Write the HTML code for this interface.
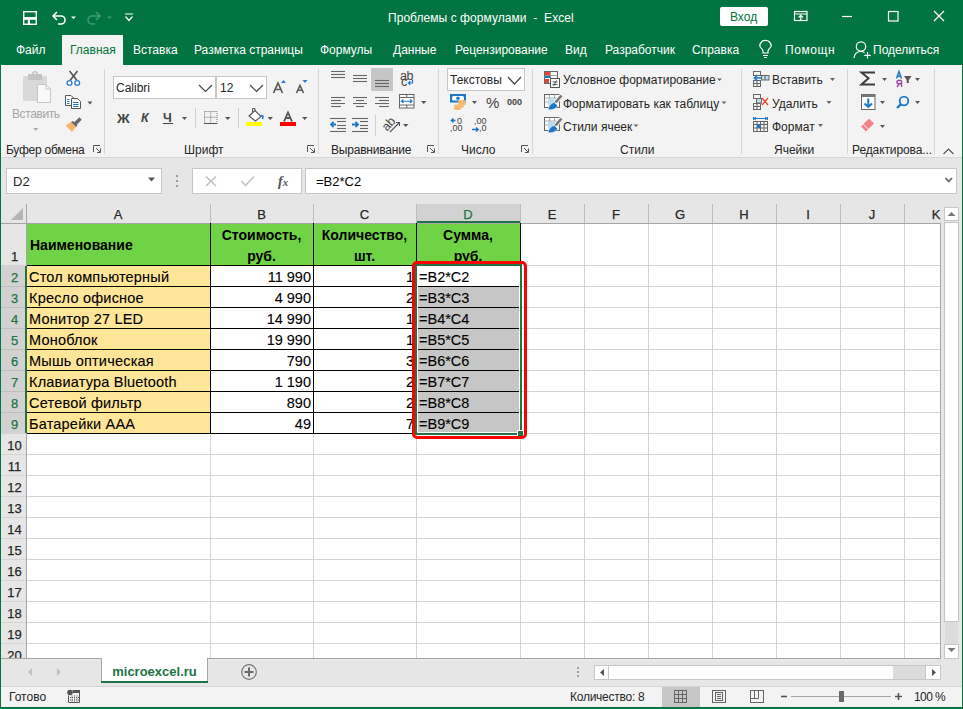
<!DOCTYPE html>
<html><head><meta charset="utf-8">
<style>
*{box-sizing:border-box;margin:0;padding:0}
html,body{width:963px;height:709px;overflow:hidden;background:#e6e6e6;font-family:"Liberation Sans",sans-serif;position:relative}
.a{position:absolute}
.t{position:absolute;white-space:nowrap;line-height:1}
svg{position:absolute;overflow:visible}
</style></head><body>

<div class="a" style="left:0px;top:0px;width:963px;height:65px;background:#027441;"></div>
<div class="t" style="left:388px;top:12px;font-size:12px;color:#fff;letter-spacing:0.05px">Проблемы с формулами &nbsp;-&nbsp; Excel</div>
<div class="a" style="left:720px;top:7px;width:48px;height:19px;background:#fff;border-radius:2px"></div>
<div class="t" style="left:730px;top:11px;font-size:12px;color:#027441;">Вход</div>
<div class="a" style="left:62px;top:35px;width:61px;height:30px;background:#f3f3f3;"></div>
<div class="t" style="left:16px;top:44px;font-size:12px;color:#fff;">Файл</div>
<div class="t" style="left:133px;top:44px;font-size:12px;color:#fff;">Вставка</div>
<div class="t" style="left:194px;top:44px;font-size:12px;color:#fff;">Разметка страницы</div>
<div class="t" style="left:320px;top:44px;font-size:12px;color:#fff;">Формулы</div>
<div class="t" style="left:393px;top:44px;font-size:12px;color:#fff;">Данные</div>
<div class="t" style="left:455px;top:44px;font-size:12px;color:#fff;">Рецензирование</div>
<div class="t" style="left:565px;top:44px;font-size:12px;color:#fff;">Вид</div>
<div class="t" style="left:605px;top:44px;font-size:12px;color:#fff;">Разработчик</div>
<div class="t" style="left:692px;top:44px;font-size:12px;color:#fff;">Справка</div>
<div class="t" style="left:785px;top:44px;font-size:12px;color:#fff;letter-spacing:0.6px">Помощн</div>
<div class="t" style="left:873px;top:44px;font-size:12px;color:#fff;">Поделиться</div>
<div class="t" style="left:70px;top:44px;font-size:12px;color:#027441;">Главная</div>
<div class="a" style="left:0px;top:65px;width:963px;height:92px;background:#f3f3f3;"></div>
<div class="a" style="left:0px;top:157px;width:963px;height:1px;background:#d6d6d6;"></div>
<div class="a" style="left:104px;top:69px;width:1px;height:85px;background:#d6d6d6;"></div>
<div class="a" style="left:318px;top:69px;width:1px;height:85px;background:#d6d6d6;"></div>
<div class="a" style="left:438px;top:69px;width:1px;height:85px;background:#d6d6d6;"></div>
<div class="a" style="left:532px;top:69px;width:1px;height:85px;background:#d6d6d6;"></div>
<div class="a" style="left:741px;top:69px;width:1px;height:85px;background:#d6d6d6;"></div>
<div class="a" style="left:847px;top:69px;width:1px;height:85px;background:#d6d6d6;"></div>
<div class="a" style="left:934px;top:69px;width:1px;height:85px;background:#d6d6d6;"></div>
<div class="t" style="left:6px;top:144px;font-size:12px;color:#262626;letter-spacing:-0.25px">Буфер обмена</div>
<div class="t" style="left:184px;top:144px;font-size:12px;color:#262626;letter-spacing:0px">Шрифт</div>
<div class="t" style="left:331px;top:144px;font-size:12px;color:#262626;letter-spacing:-0.2px">Выравнивание</div>
<div class="t" style="left:461px;top:144px;font-size:12px;color:#262626;letter-spacing:0px">Число</div>
<div class="t" style="left:620px;top:144px;font-size:12px;color:#262626;letter-spacing:0px">Стили</div>
<div class="t" style="left:774px;top:144px;font-size:12px;color:#262626;letter-spacing:0px">Ячейки</div>
<div class="t" style="left:852px;top:144px;font-size:12px;color:#262626;letter-spacing:-0.1px">Редактирова...</div>
<div class="a" style="left:6px;top:168px;width:156px;height:26px;background:#fff;border:1px solid #c6c6c6"></div>
<div class="t" style="left:13px;top:175px;font-size:13px;color:#262626;">D2</div>
<div class="a" style="left:192px;top:168px;width:110px;height:26px;background:#fff;border:1px solid #c6c6c6"></div>
<div class="a" style="left:305px;top:168px;width:652px;height:26px;background:#fff;border:1px solid #c6c6c6"></div>
<div class="t" style="left:316px;top:175px;font-size:13px;color:#000;">=B2*C2</div>
<div class="t" style="left:278px;top:175px;font-family:'Liberation Serif';font-style:italic;font-weight:bold;font-size:14px;color:#555">f<span style="font-size:11px">x</span></div>
<div class="a" style="left:1px;top:204px;width:940px;height:19px;background:#e6e6e6;"></div>
<div class="a" style="left:27px;top:224px;width:914px;height:434px;background:#fff;"></div>
<div class="a" style="left:210px;top:224px;width:1px;height:434px;background:#d4d4d4;"></div>
<div class="a" style="left:313px;top:224px;width:1px;height:434px;background:#d4d4d4;"></div>
<div class="a" style="left:416px;top:224px;width:1px;height:434px;background:#d4d4d4;"></div>
<div class="a" style="left:520px;top:224px;width:1px;height:434px;background:#d4d4d4;"></div>
<div class="a" style="left:584px;top:224px;width:1px;height:434px;background:#d4d4d4;"></div>
<div class="a" style="left:648px;top:224px;width:1px;height:434px;background:#d4d4d4;"></div>
<div class="a" style="left:712px;top:224px;width:1px;height:434px;background:#d4d4d4;"></div>
<div class="a" style="left:776px;top:224px;width:1px;height:434px;background:#d4d4d4;"></div>
<div class="a" style="left:840px;top:224px;width:1px;height:434px;background:#d4d4d4;"></div>
<div class="a" style="left:904px;top:224px;width:1px;height:434px;background:#d4d4d4;"></div>
<div class="a" style="left:27px;top:265px;width:914px;height:1px;background:#d4d4d4;"></div>
<div class="a" style="left:27px;top:286px;width:914px;height:1px;background:#d4d4d4;"></div>
<div class="a" style="left:27px;top:307px;width:914px;height:1px;background:#d4d4d4;"></div>
<div class="a" style="left:27px;top:328px;width:914px;height:1px;background:#d4d4d4;"></div>
<div class="a" style="left:27px;top:349px;width:914px;height:1px;background:#d4d4d4;"></div>
<div class="a" style="left:27px;top:370px;width:914px;height:1px;background:#d4d4d4;"></div>
<div class="a" style="left:27px;top:391px;width:914px;height:1px;background:#d4d4d4;"></div>
<div class="a" style="left:27px;top:412px;width:914px;height:1px;background:#d4d4d4;"></div>
<div class="a" style="left:27px;top:433px;width:914px;height:1px;background:#d4d4d4;"></div>
<div class="a" style="left:27px;top:454px;width:914px;height:1px;background:#d4d4d4;"></div>
<div class="a" style="left:27px;top:475px;width:914px;height:1px;background:#d4d4d4;"></div>
<div class="a" style="left:27px;top:496px;width:914px;height:1px;background:#d4d4d4;"></div>
<div class="a" style="left:27px;top:517px;width:914px;height:1px;background:#d4d4d4;"></div>
<div class="a" style="left:27px;top:538px;width:914px;height:1px;background:#d4d4d4;"></div>
<div class="a" style="left:27px;top:559px;width:914px;height:1px;background:#d4d4d4;"></div>
<div class="a" style="left:27px;top:580px;width:914px;height:1px;background:#d4d4d4;"></div>
<div class="a" style="left:27px;top:601px;width:914px;height:1px;background:#d4d4d4;"></div>
<div class="a" style="left:27px;top:622px;width:914px;height:1px;background:#d4d4d4;"></div>
<div class="a" style="left:27px;top:643px;width:914px;height:1px;background:#d4d4d4;"></div>
<div class="a" style="left:26px;top:204px;width:1px;height:19px;background:#bdbdbd;"></div>
<div class="a" style="left:210px;top:204px;width:1px;height:19px;background:#bdbdbd;"></div>
<div class="a" style="left:313px;top:204px;width:1px;height:19px;background:#bdbdbd;"></div>
<div class="a" style="left:416px;top:204px;width:1px;height:19px;background:#bdbdbd;"></div>
<div class="a" style="left:520px;top:204px;width:1px;height:19px;background:#bdbdbd;"></div>
<div class="a" style="left:584px;top:204px;width:1px;height:19px;background:#bdbdbd;"></div>
<div class="a" style="left:648px;top:204px;width:1px;height:19px;background:#bdbdbd;"></div>
<div class="a" style="left:712px;top:204px;width:1px;height:19px;background:#bdbdbd;"></div>
<div class="a" style="left:776px;top:204px;width:1px;height:19px;background:#bdbdbd;"></div>
<div class="a" style="left:840px;top:204px;width:1px;height:19px;background:#bdbdbd;"></div>
<div class="a" style="left:904px;top:204px;width:1px;height:19px;background:#bdbdbd;"></div>
<div class="a" style="left:1px;top:223px;width:940px;height:1px;background:#a6a6a6;"></div>
<div class="a" style="left:26px;top:204px;width:1px;height:454px;background:#a6a6a6;"></div>
<div class="a" style="left:1px;top:265px;width:25px;height:1px;background:#d4d4d4;"></div>
<div class="a" style="left:1px;top:286px;width:25px;height:1px;background:#d4d4d4;"></div>
<div class="a" style="left:1px;top:307px;width:25px;height:1px;background:#d4d4d4;"></div>
<div class="a" style="left:1px;top:328px;width:25px;height:1px;background:#d4d4d4;"></div>
<div class="a" style="left:1px;top:349px;width:25px;height:1px;background:#d4d4d4;"></div>
<div class="a" style="left:1px;top:370px;width:25px;height:1px;background:#d4d4d4;"></div>
<div class="a" style="left:1px;top:391px;width:25px;height:1px;background:#d4d4d4;"></div>
<div class="a" style="left:1px;top:412px;width:25px;height:1px;background:#d4d4d4;"></div>
<div class="a" style="left:1px;top:433px;width:25px;height:1px;background:#d4d4d4;"></div>
<div class="a" style="left:1px;top:454px;width:25px;height:1px;background:#d4d4d4;"></div>
<div class="a" style="left:1px;top:475px;width:25px;height:1px;background:#d4d4d4;"></div>
<div class="a" style="left:1px;top:496px;width:25px;height:1px;background:#d4d4d4;"></div>
<div class="a" style="left:1px;top:517px;width:25px;height:1px;background:#d4d4d4;"></div>
<div class="a" style="left:1px;top:538px;width:25px;height:1px;background:#d4d4d4;"></div>
<div class="a" style="left:1px;top:559px;width:25px;height:1px;background:#d4d4d4;"></div>
<div class="a" style="left:1px;top:580px;width:25px;height:1px;background:#d4d4d4;"></div>
<div class="a" style="left:1px;top:601px;width:25px;height:1px;background:#d4d4d4;"></div>
<div class="a" style="left:1px;top:622px;width:25px;height:1px;background:#d4d4d4;"></div>
<div class="a" style="left:1px;top:643px;width:25px;height:1px;background:#d4d4d4;"></div>
<div class="a" style="left:417px;top:204px;width:103px;height:19px;background:#d2d2d2;"></div>
<div class="a" style="left:417px;top:221px;width:103px;height:2px;background:#217346;"></div>
<div class="a" style="left:1px;top:266px;width:25px;height:167px;background:#d2d2d2;"></div>
<div class="a" style="left:1px;top:286px;width:25px;height:1px;background:#bdbdbd;"></div>
<div class="a" style="left:1px;top:307px;width:25px;height:1px;background:#bdbdbd;"></div>
<div class="a" style="left:1px;top:328px;width:25px;height:1px;background:#bdbdbd;"></div>
<div class="a" style="left:1px;top:349px;width:25px;height:1px;background:#bdbdbd;"></div>
<div class="a" style="left:1px;top:370px;width:25px;height:1px;background:#bdbdbd;"></div>
<div class="a" style="left:1px;top:391px;width:25px;height:1px;background:#bdbdbd;"></div>
<div class="a" style="left:1px;top:412px;width:25px;height:1px;background:#bdbdbd;"></div>
<div class="a" style="left:25px;top:266px;width:2px;height:167px;background:#217346;"></div>
<div class="t" style="left:26px;top:208px;width:184px;text-align:center;font-size:13px;color:#262626;-webkit-text-stroke:0.25px #262626">A</div>
<div class="t" style="left:210px;top:208px;width:103px;text-align:center;font-size:13px;color:#262626;-webkit-text-stroke:0.25px #262626">B</div>
<div class="t" style="left:313px;top:208px;width:103px;text-align:center;font-size:13px;color:#262626;-webkit-text-stroke:0.25px #262626">C</div>
<div class="t" style="left:416px;top:208px;width:104px;text-align:center;font-size:13px;color:#217346;-webkit-text-stroke:0.25px #217346">D</div>
<div class="t" style="left:520px;top:208px;width:64px;text-align:center;font-size:13px;color:#262626;-webkit-text-stroke:0.25px #262626">E</div>
<div class="t" style="left:584px;top:208px;width:64px;text-align:center;font-size:13px;color:#262626;-webkit-text-stroke:0.25px #262626">F</div>
<div class="t" style="left:648px;top:208px;width:64px;text-align:center;font-size:13px;color:#262626;-webkit-text-stroke:0.25px #262626">G</div>
<div class="t" style="left:712px;top:208px;width:64px;text-align:center;font-size:13px;color:#262626;-webkit-text-stroke:0.25px #262626">H</div>
<div class="t" style="left:776px;top:208px;width:64px;text-align:center;font-size:13px;color:#262626;-webkit-text-stroke:0.25px #262626">I</div>
<div class="t" style="left:840px;top:208px;width:64px;text-align:center;font-size:13px;color:#262626;-webkit-text-stroke:0.25px #262626">J</div>
<div class="t" style="left:904px;top:208px;width:64px;text-align:center;font-size:13px;color:#262626;-webkit-text-stroke:0.25px #262626">K</div>
<div class="t" style="left:2px;top:250px;width:25px;text-align:center;font-size:13px;color:#262626;-webkit-text-stroke:0.25px #262626">1</div>
<div class="t" style="left:2px;top:271px;width:25px;text-align:center;font-size:13px;color:#217346;-webkit-text-stroke:0.25px #217346">2</div>
<div class="t" style="left:2px;top:292px;width:25px;text-align:center;font-size:13px;color:#217346;-webkit-text-stroke:0.25px #217346">3</div>
<div class="t" style="left:2px;top:313px;width:25px;text-align:center;font-size:13px;color:#217346;-webkit-text-stroke:0.25px #217346">4</div>
<div class="t" style="left:2px;top:334px;width:25px;text-align:center;font-size:13px;color:#217346;-webkit-text-stroke:0.25px #217346">5</div>
<div class="t" style="left:2px;top:355px;width:25px;text-align:center;font-size:13px;color:#217346;-webkit-text-stroke:0.25px #217346">6</div>
<div class="t" style="left:2px;top:376px;width:25px;text-align:center;font-size:13px;color:#217346;-webkit-text-stroke:0.25px #217346">7</div>
<div class="t" style="left:2px;top:397px;width:25px;text-align:center;font-size:13px;color:#217346;-webkit-text-stroke:0.25px #217346">8</div>
<div class="t" style="left:2px;top:418px;width:25px;text-align:center;font-size:13px;color:#217346;-webkit-text-stroke:0.25px #217346">9</div>
<div class="t" style="left:2px;top:439px;width:25px;text-align:center;font-size:13px;color:#262626;-webkit-text-stroke:0.25px #262626">10</div>
<div class="t" style="left:2px;top:460px;width:25px;text-align:center;font-size:13px;color:#262626;-webkit-text-stroke:0.25px #262626">11</div>
<div class="t" style="left:2px;top:481px;width:25px;text-align:center;font-size:13px;color:#262626;-webkit-text-stroke:0.25px #262626">12</div>
<div class="t" style="left:2px;top:502px;width:25px;text-align:center;font-size:13px;color:#262626;-webkit-text-stroke:0.25px #262626">13</div>
<div class="t" style="left:2px;top:523px;width:25px;text-align:center;font-size:13px;color:#262626;-webkit-text-stroke:0.25px #262626">14</div>
<div class="t" style="left:2px;top:544px;width:25px;text-align:center;font-size:13px;color:#262626;-webkit-text-stroke:0.25px #262626">15</div>
<div class="t" style="left:2px;top:565px;width:25px;text-align:center;font-size:13px;color:#262626;-webkit-text-stroke:0.25px #262626">16</div>
<div class="t" style="left:2px;top:586px;width:25px;text-align:center;font-size:13px;color:#262626;-webkit-text-stroke:0.25px #262626">17</div>
<div class="t" style="left:2px;top:607px;width:25px;text-align:center;font-size:13px;color:#262626;-webkit-text-stroke:0.25px #262626">18</div>
<div class="t" style="left:2px;top:628px;width:25px;text-align:center;font-size:13px;color:#262626;-webkit-text-stroke:0.25px #262626">19</div>
<div class="t" style="left:2px;top:649px;width:25px;text-align:center;font-size:13px;color:#262626;-webkit-text-stroke:0.25px #262626">20</div>
<div class="a" style="left:27px;top:224px;width:493px;height:41px;background:#70d245;"></div>
<div class="a" style="left:27px;top:266px;width:183px;height:20px;background:#fee598;"></div>
<div class="a" style="left:211px;top:266px;width:102px;height:20px;background:#fff;"></div>
<div class="a" style="left:314px;top:266px;width:102px;height:20px;background:#fff;"></div>
<div class="a" style="left:27px;top:287px;width:183px;height:20px;background:#fee598;"></div>
<div class="a" style="left:211px;top:287px;width:102px;height:20px;background:#fff;"></div>
<div class="a" style="left:314px;top:287px;width:102px;height:20px;background:#fff;"></div>
<div class="a" style="left:27px;top:308px;width:183px;height:20px;background:#fee598;"></div>
<div class="a" style="left:211px;top:308px;width:102px;height:20px;background:#fff;"></div>
<div class="a" style="left:314px;top:308px;width:102px;height:20px;background:#fff;"></div>
<div class="a" style="left:27px;top:329px;width:183px;height:20px;background:#fee598;"></div>
<div class="a" style="left:211px;top:329px;width:102px;height:20px;background:#fff;"></div>
<div class="a" style="left:314px;top:329px;width:102px;height:20px;background:#fff;"></div>
<div class="a" style="left:27px;top:350px;width:183px;height:20px;background:#fee598;"></div>
<div class="a" style="left:211px;top:350px;width:102px;height:20px;background:#fff;"></div>
<div class="a" style="left:314px;top:350px;width:102px;height:20px;background:#fff;"></div>
<div class="a" style="left:27px;top:371px;width:183px;height:20px;background:#fee598;"></div>
<div class="a" style="left:211px;top:371px;width:102px;height:20px;background:#fff;"></div>
<div class="a" style="left:314px;top:371px;width:102px;height:20px;background:#fff;"></div>
<div class="a" style="left:27px;top:392px;width:183px;height:20px;background:#fee598;"></div>
<div class="a" style="left:211px;top:392px;width:102px;height:20px;background:#fff;"></div>
<div class="a" style="left:314px;top:392px;width:102px;height:20px;background:#fff;"></div>
<div class="a" style="left:27px;top:413px;width:183px;height:20px;background:#fee598;"></div>
<div class="a" style="left:211px;top:413px;width:102px;height:20px;background:#fff;"></div>
<div class="a" style="left:314px;top:413px;width:102px;height:20px;background:#fff;"></div>
<div class="a" style="left:417px;top:287px;width:103px;height:146px;background:#c6c6c6;"></div>
<div class="a" style="left:210px;top:223px;width:1px;height:211px;background:#000;"></div>
<div class="a" style="left:313px;top:223px;width:1px;height:211px;background:#000;"></div>
<div class="a" style="left:416px;top:223px;width:1px;height:211px;background:#000;"></div>
<div class="a" style="left:520px;top:223px;width:1px;height:211px;background:#000;"></div>
<div class="a" style="left:27px;top:265px;width:494px;height:1px;background:#000;"></div>
<div class="a" style="left:27px;top:286px;width:494px;height:1px;background:#000;"></div>
<div class="a" style="left:27px;top:307px;width:494px;height:1px;background:#000;"></div>
<div class="a" style="left:27px;top:328px;width:494px;height:1px;background:#000;"></div>
<div class="a" style="left:27px;top:349px;width:494px;height:1px;background:#000;"></div>
<div class="a" style="left:27px;top:370px;width:494px;height:1px;background:#000;"></div>
<div class="a" style="left:27px;top:391px;width:494px;height:1px;background:#000;"></div>
<div class="a" style="left:27px;top:412px;width:494px;height:1px;background:#000;"></div>
<div class="a" style="left:27px;top:433px;width:494px;height:1px;background:#000;"></div>
<div class="t" style="left:30px;top:238px;font-size:14px;color:#000;font-weight:bold">Наименование</div>
<div class="t" style="left:210px;top:228px;width:103px;text-align:center;font-size:14px;font-weight:bold;color:#000">Стоимость,</div>
<div class="t" style="left:210px;top:249px;width:103px;text-align:center;font-size:14px;font-weight:bold;color:#000">руб.</div>
<div class="t" style="left:313px;top:228px;width:103px;text-align:center;font-size:14px;font-weight:bold;color:#000">Количество,</div>
<div class="t" style="left:313px;top:249px;width:103px;text-align:center;font-size:14px;font-weight:bold;color:#000">шт.</div>
<div class="t" style="left:416px;top:228px;width:104px;text-align:center;font-size:14px;font-weight:bold;color:#000">Сумма,</div>
<div class="t" style="left:416px;top:249px;width:104px;text-align:center;font-size:14px;font-weight:bold;color:#000">руб.</div>
<div class="t" style="left:29px;top:270px;font-size:14.5px;color:#000;-webkit-text-stroke:0.1px #000;letter-spacing:0.2px">Стол компьютерный</div>
<div class="t" style="left:211px;top:270px;width:100px;text-align:right;font-size:14.5px;color:#000;-webkit-text-stroke:0.1px #000">11 990</div>
<div class="t" style="left:314px;top:270px;width:100px;text-align:right;font-size:14.5px;color:#000;-webkit-text-stroke:0.1px #000">1</div>
<div class="t" style="left:419px;top:270px;font-size:14.5px;color:#000;-webkit-text-stroke:0.1px #000">=B2*C2</div>
<div class="t" style="left:29px;top:291px;font-size:14.5px;color:#000;-webkit-text-stroke:0.1px #000;letter-spacing:0.2px">Кресло офисное</div>
<div class="t" style="left:211px;top:291px;width:100px;text-align:right;font-size:14.5px;color:#000;-webkit-text-stroke:0.1px #000">4 990</div>
<div class="t" style="left:314px;top:291px;width:100px;text-align:right;font-size:14.5px;color:#000;-webkit-text-stroke:0.1px #000">2</div>
<div class="t" style="left:419px;top:291px;font-size:14.5px;color:#000;-webkit-text-stroke:0.1px #000">=B3*C3</div>
<div class="t" style="left:29px;top:312px;font-size:14.5px;color:#000;-webkit-text-stroke:0.1px #000;letter-spacing:0.2px">Монитор 27 LED</div>
<div class="t" style="left:211px;top:312px;width:100px;text-align:right;font-size:14.5px;color:#000;-webkit-text-stroke:0.1px #000">14 990</div>
<div class="t" style="left:314px;top:312px;width:100px;text-align:right;font-size:14.5px;color:#000;-webkit-text-stroke:0.1px #000">1</div>
<div class="t" style="left:419px;top:312px;font-size:14.5px;color:#000;-webkit-text-stroke:0.1px #000">=B4*C4</div>
<div class="t" style="left:29px;top:333px;font-size:14.5px;color:#000;-webkit-text-stroke:0.1px #000;letter-spacing:0.2px">Моноблок</div>
<div class="t" style="left:211px;top:333px;width:100px;text-align:right;font-size:14.5px;color:#000;-webkit-text-stroke:0.1px #000">19 990</div>
<div class="t" style="left:314px;top:333px;width:100px;text-align:right;font-size:14.5px;color:#000;-webkit-text-stroke:0.1px #000">1</div>
<div class="t" style="left:419px;top:333px;font-size:14.5px;color:#000;-webkit-text-stroke:0.1px #000">=B5*C5</div>
<div class="t" style="left:29px;top:354px;font-size:14.5px;color:#000;-webkit-text-stroke:0.1px #000;letter-spacing:0.2px">Мышь оптическая</div>
<div class="t" style="left:211px;top:354px;width:100px;text-align:right;font-size:14.5px;color:#000;-webkit-text-stroke:0.1px #000">790</div>
<div class="t" style="left:314px;top:354px;width:100px;text-align:right;font-size:14.5px;color:#000;-webkit-text-stroke:0.1px #000">3</div>
<div class="t" style="left:419px;top:354px;font-size:14.5px;color:#000;-webkit-text-stroke:0.1px #000">=B6*C6</div>
<div class="t" style="left:29px;top:375px;font-size:14.5px;color:#000;-webkit-text-stroke:0.1px #000;letter-spacing:0.2px">Клавиатура Bluetooth</div>
<div class="t" style="left:211px;top:375px;width:100px;text-align:right;font-size:14.5px;color:#000;-webkit-text-stroke:0.1px #000">1 190</div>
<div class="t" style="left:314px;top:375px;width:100px;text-align:right;font-size:14.5px;color:#000;-webkit-text-stroke:0.1px #000">2</div>
<div class="t" style="left:419px;top:375px;font-size:14.5px;color:#000;-webkit-text-stroke:0.1px #000">=B7*C7</div>
<div class="t" style="left:29px;top:396px;font-size:14.5px;color:#000;-webkit-text-stroke:0.1px #000;letter-spacing:0.2px">Сетевой фильтр</div>
<div class="t" style="left:211px;top:396px;width:100px;text-align:right;font-size:14.5px;color:#000;-webkit-text-stroke:0.1px #000">890</div>
<div class="t" style="left:314px;top:396px;width:100px;text-align:right;font-size:14.5px;color:#000;-webkit-text-stroke:0.1px #000">2</div>
<div class="t" style="left:419px;top:396px;font-size:14.5px;color:#000;-webkit-text-stroke:0.1px #000">=B8*C8</div>
<div class="t" style="left:29px;top:417px;font-size:14.5px;color:#000;-webkit-text-stroke:0.1px #000;letter-spacing:0.2px">Батарейки ААА</div>
<div class="t" style="left:211px;top:417px;width:100px;text-align:right;font-size:14.5px;color:#000;-webkit-text-stroke:0.1px #000">49</div>
<div class="t" style="left:314px;top:417px;width:100px;text-align:right;font-size:14.5px;color:#000;-webkit-text-stroke:0.1px #000">7</div>
<div class="t" style="left:419px;top:417px;font-size:14.5px;color:#000;-webkit-text-stroke:0.1px #000">=B9*C9</div>
<div class="a" style="left:417px;top:266px;width:1px;height:167px;background:#fff;"></div>
<div class="a" style="left:519px;top:266px;width:1px;height:167px;background:#fff;"></div>
<div class="a" style="left:417px;top:432px;width:103px;height:1px;background:#fff;"></div>
<div class="a" style="left:415px;top:264px;width:107px;height:2px;background:#217346;"></div>
<div class="a" style="left:415px;top:264px;width:2px;height:171px;background:#217346;"></div>
<div class="a" style="left:520px;top:264px;width:2px;height:166px;background:#217346;"></div>
<div class="a" style="left:415px;top:433px;width:102px;height:2px;background:#217346;"></div>
<div class="a" style="left:517px;top:430px;width:7px;height:7px;background:#fff;"></div>
<div class="a" style="left:518px;top:431px;width:5px;height:5px;background:#217346;"></div>
<div class="a" style="left:25px;top:266px;width:2px;height:167px;background:#217346;"></div>
<div class="a" style="left:412px;top:261px;width:115px;height:178px;border:3px solid #ff0000;border-radius:5px"></div>
<div class="a" style="left:941px;top:204px;width:21px;height:454px;background:#e6e6e6;"></div>
<div class="a" style="left:940px;top:223px;width:1px;height:435px;background:#a6a6a6;"></div>
<div class="a" style="left:944px;top:207px;width:15px;height:14px;background:#fff;border:1px solid #c6c6c6"></div>
<div class="a" style="left:944px;top:222px;width:15px;height:400px;background:#fff;border:1px solid #c6c6c6"></div>
<div class="a" style="left:945px;top:622px;width:13px;height:22px;background:#dcdcdc;"></div>
<div class="a" style="left:944px;top:644px;width:15px;height:15px;background:#fff;border:1px solid #c6c6c6"></div>
<div class="a" style="left:1px;top:658px;width:940px;height:1px;background:#a6a6a6;"></div>
<div class="a" style="left:1px;top:659px;width:961px;height:27px;background:#e6e6e6;"></div>
<div class="a" style="left:101px;top:658px;width:107px;height:24px;background:#fff;border-left:1px solid #a6a6a6;border-right:1px solid #a6a6a6"></div>
<div class="a" style="left:101px;top:681px;width:107px;height:2px;background:#217346;"></div>
<div class="t" style="left:101px;top:665px;width:107px;text-align:center;font-size:13px;font-weight:bold;color:#217346">microexcel.ru</div>
<div class="a" style="left:594px;top:665px;width:347px;height:15px;background:#fff;border:1px solid #c6c6c6"></div>
<div class="a" style="left:893px;top:666px;width:32px;height:13px;background:#dcdcdc;"></div>
<div class="a" style="left:608px;top:665px;width:1px;height:15px;background:#c6c6c6;"></div>
<div class="a" style="left:925px;top:665px;width:1px;height:15px;background:#c6c6c6;"></div>
<div class="a" style="left:1px;top:686px;width:961px;height:1px;background:#d4d4d4;"></div>
<div class="a" style="left:1px;top:687px;width:961px;height:20px;background:#f3f3f3;"></div>
<div class="t" style="left:9px;top:691px;font-size:12px;color:#262626;">Готово</div>
<div class="t" style="left:570px;top:691px;font-size:12px;color:#262626;letter-spacing:-0.25px">Количество: 8</div>
<div class="a" style="left:662px;top:687px;width:38px;height:20px;background:#c6c6c6;"></div>
<div class="t" style="left:914px;top:691px;font-size:12px;color:#262626;letter-spacing:-0.6px">100 %</div>
<svg class="a" style="left:0;top:0" width="963" height="709" viewBox="0 0 963 709"><rect x="23.7" y="11.7" width="12.6" height="12.6" fill="none" stroke="#fff" stroke-width="1.4"/><rect x="24" y="17" width="12" height="2.8" fill="#fff"/><rect x="27.8" y="19" width="2.2" height="5" fill="#fff"/><path d="M57,12 L53,16 L57,20 M53.5,16 H61 A4,4 0 0 1 61,24 H58" fill="none" stroke="#fff" stroke-width="1.6"/><path d="M71,16.5 H76 L73.5,19 Z" fill="#fff"/><path d="M96,12 L100,16 L96,20 M99.5,16 H92 A4,4 0 0 0 92,24 H95" fill="none" stroke="#3f9a74" stroke-width="1.6"/><path d="M107,16.5 H112 L109.5,19 Z" fill="#3f9a74"/><path d="M125,14 H133 M125.5,16.5 L129,20.5 L132.5,16.5" fill="none" stroke="#fff" stroke-width="1.2"/><g fill="none" stroke="#fff" stroke-width="1.2"><rect x="794.5" y="11.5" width="12.5" height="9"/><path d="M795,14 H807 M800.75,20.5 V15.5 M798.5,17.5 L800.75,15.3 L803,17.5"/></g><path d="M842,16.5 H852" stroke="#fff" stroke-width="1.2"/><rect x="888.5" y="11.5" width="9.5" height="9.5" fill="none" stroke="#fff" stroke-width="1.2"/><path d="M934,11 L944,21 M944,11 L934,21" stroke="#fff" stroke-width="1.2"/><g fill="none" stroke="#fff" stroke-width="1.2"><path d="M763,53 V51 C763,49 759.8,47.5 759.8,46 A5.7,5.7 0 1 1 771.2,46 C771.2,47.5 768,49 768,51 V53 Z"/><path d="M763,55.5 H768 M764,57.5 H767"/></g><g fill="none" stroke="#fff" stroke-width="1.2"><circle cx="861" cy="46.5" r="4.7"/><path d="M854,58 C854.5,54 857,51.5 861,51.5 C862.5,51.5 863.5,52 864.5,52.5"/><path d="M867.5,52 V58.5 M864.3,55.3 H870.7"/></g><rect x="23" y="76" width="24" height="25" rx="1" fill="#d9d9d9"/><rect x="28" y="74" width="14" height="6" fill="#c4c4c4"/><circle cx="35" cy="74" r="2.2" fill="none" stroke="#c4c4c4" stroke-width="1.5"/><path d="M37.5,84.5 H46 L50.5,89 V102.5 H37.5 Z" fill="#fbf8fb" stroke="#c6c6c6"/><path d="M46,84.5 V89 H50.5" fill="none" stroke="#c6c6c6"/><path d="M33,128 H38.5 L35.75,131 Z" fill="#b0b0b0"/><path d="M69.5,71 L77,80.5 M77.5,71 L70,80.5" stroke="#555" stroke-width="1.6"/><circle cx="69.5" cy="83" r="2.4" fill="#fff" stroke="#2b7bd0" stroke-width="1.3"/><circle cx="77.2" cy="83" r="2.4" fill="#fff" stroke="#2b7bd0" stroke-width="1.3"/><path d="M65.5,95.5 H71 L73.5,98 V105.5 H65.5 Z" fill="#fff" stroke="#555"/><path d="M71.5,98.5 H77.5 L80.5,101.5 V108.5 H71.5 Z" fill="#fff" stroke="#555"/><path d="M67,99.5 H69.5 M67,101.5 H69.5 M67,103.5 H69.5 M73,102.5 H78.5 M73,104.5 H78.5 M73,106.5 H78.5" stroke="#1e78c8" stroke-width="1"/><path d="M87.5,101.5 H92.5 L90,104.5 Z" fill="#555"/><path d="M80.5,118.5 L74.5,124.5" stroke="#6a6a6a" stroke-width="3.6"/><path d="M65.5,125.5 L71,122 L76,127 L72,132 Z" fill="#f5b66a"/><path d="M71,122 L73,121 L77.5,125.5 L76,127 Z" fill="#6a6a6a"/><rect x="113.5" y="76.5" width="102" height="22" fill="#fff" stroke="#c6c6c6"/><rect x="216.5" y="76.5" width="50" height="22" fill="#fff" stroke="#c6c6c6"/><path d="M199,85 L205.5,91.5 L212,85 M250,85 L256.5,91.5 L263,85" fill="none" stroke="#444" stroke-width="1.2"/><path d="M273.5,93 L278,83 L282.5,93 M275.2,89.5 H280.8" fill="none" stroke="#5a5a5a" stroke-width="1.7"/><path d="M281,83 H286 L283.5,80 Z M302.5,80 H307.5 L305,83 Z" fill="#2b7bd0"/><path d="M296.5,93 L300,85.5 L303.5,93 M297.8,90.3 H302.2" fill="none" stroke="#5a5a5a" stroke-width="1.6"/><path d="M163,123.5 H173" stroke="#444" stroke-width="1"/><path d="M182,117 H187 L184.5,120 Z M225,117 H230.5 L227.75,120 Z M267.5,117 H273 L270.25,120 Z M302,117 H307.5 L304.75,120 Z" fill="#555"/><path d="M195.5,108 V128 M238.5,108 V128" stroke="#d0d0d0"/><path d="M204.5,111.5 H217 V123 M204.5,111.5 V123 M210.75,111.5 V123 M204.5,117.25 H217" fill="none" stroke="#777" stroke-width="1" stroke-dasharray="1,1"/><path d="M204,123.5 H217.5" stroke="#555" stroke-width="1"/><path d="M249,116 L255,110.5 L261,116.5 L255.5,121 Z" fill="#fff" stroke="#555" stroke-width="1.1"/><path d="M252.5,112.5 V108.5 H255 V111" fill="none" stroke="#555"/><path d="M261,116.5 C263,114 263.5,117 262.5,119" fill="none" stroke="#2b7bd0" stroke-width="1.6"/><rect x="246" y="122" width="16" height="4" fill="#ffff00"/><path d="M284,121.5 L288,112.5 L292,121.5 M285.6,118 H290.4" fill="none" stroke="#555" stroke-width="1.8"/><rect x="280" y="122" width="16" height="4" fill="#ff0000"/><rect x="371" y="68" width="22" height="23" fill="#c6c6c6"/><path d="M331,71.5 H345" stroke="#666" stroke-width="1.1"/><path d="M331,74.5 H345" stroke="#666" stroke-width="1.1"/><path d="M331,77.5 H345" stroke="#666" stroke-width="1.1"/><path d="M353,75.5 H367" stroke="#666" stroke-width="1.1"/><path d="M353,78.5 H367" stroke="#666" stroke-width="1.1"/><path d="M353,81.5 H367" stroke="#666" stroke-width="1.1"/><path d="M375,80.5 H389" stroke="#666" stroke-width="1.1"/><path d="M375,83.5 H389" stroke="#666" stroke-width="1.1"/><path d="M375,86.5 H389" stroke="#666" stroke-width="1.1"/><path d="M331,97.5 H345" stroke="#666" stroke-width="1.1"/><path d="M331,100.5 H341" stroke="#666" stroke-width="1.1"/><path d="M331,103.5 H345" stroke="#666" stroke-width="1.1"/><path d="M331,106.5 H341" stroke="#666" stroke-width="1.1"/><path d="M353,97.5 H367" stroke="#666" stroke-width="1.1"/><path d="M356,100.5 H364" stroke="#666" stroke-width="1.1"/><path d="M353,103.5 H367" stroke="#666" stroke-width="1.1"/><path d="M356,106.5 H364" stroke="#666" stroke-width="1.1"/><path d="M375,97.5 H389" stroke="#666" stroke-width="1.1"/><path d="M379,100.5 H389" stroke="#666" stroke-width="1.1"/><path d="M375,103.5 H389" stroke="#666" stroke-width="1.1"/><path d="M379,106.5 H389" stroke="#666" stroke-width="1.1"/><path d="M330,118.5 H346" stroke="#666" stroke-width="1.1"/><path d="M337,121.5 H346" stroke="#666" stroke-width="1.1"/><path d="M337,125.5 H346" stroke="#666" stroke-width="1.1"/><path d="M337,128.5 H346" stroke="#666" stroke-width="1.1"/><path d="M330,131.5 H346" stroke="#666" stroke-width="1.1"/><path d="M352,118.5 H368" stroke="#666" stroke-width="1.1"/><path d="M360,121.5 H368" stroke="#666" stroke-width="1.1"/><path d="M360,125.5 H368" stroke="#666" stroke-width="1.1"/><path d="M360,128.5 H368" stroke="#666" stroke-width="1.1"/><path d="M352,131.5 H368" stroke="#666" stroke-width="1.1"/><path d="M336,124.5 H331 M333.5,122 L331,124.5 L333.5,127" fill="none" stroke="#1e78c8" stroke-width="1.8"/><path d="M352,124.5 H358 M355.5,122 L358,124.5 L355.5,127" fill="none" stroke="#1e78c8" stroke-width="1.8"/><path d="M375.5,115 V136" stroke="#d0d0d0"/><rect x="399.5" y="94.5" width="14.5" height="13.5" fill="#fff" stroke="#666"/><path d="M399.5,97.5 H414 M399.5,105 H414 M406.75,94.5 V97.5 M406.75,105 V108" fill="none" stroke="#666"/><path d="M401.5,101.25 H412 M403.5,99.5 L401.5,101.25 L403.5,103 M410,99.5 L412,101.25 L410,103" fill="none" stroke="#1e78c8" stroke-width="1.1"/><path d="M421,101 H426.5 L423.75,104 Z M403,124 H408.5 L405.75,127 Z" fill="#555"/><path d="M390,132 L399,123 M396,122.5 L399.5,122.5 L399.5,126" fill="none" stroke="#555" stroke-width="1.1"/><rect x="447.5" y="68.5" width="77" height="22" fill="#fff" stroke="#c6c6c6"/><path d="M508,77 L514.5,84 L521,77" fill="none" stroke="#444" stroke-width="1.2"/><rect x="450" y="94" width="16" height="8.5" fill="#1e78c8"/><rect x="452" y="96" width="12" height="4.5" rx="1.5" fill="#fff"/><circle cx="458" cy="98.2" r="1.8" fill="#1e78c8"/><g fill="#f6b96f"><ellipse cx="462" cy="101.5" rx="4" ry="1.4"/><ellipse cx="462" cy="104" rx="4" ry="1.4"/><ellipse cx="462" cy="106.5" rx="2" ry="1.3"/><ellipse cx="457.5" cy="106" rx="3.8" ry="1.4"/><ellipse cx="457.5" cy="108.5" rx="3.8" ry="1.4"/></g><path d="M472,101 H477 L474.5,104 Z" fill="#555"/><path d="M455.5,120.5 H451.5 M453.5,118.5 L451.3,120.5 L453.5,122.5 M472,129.5 H478 M476,127.5 L478.2,129.5 L476,131.5" fill="none" stroke="#1e78c8" stroke-width="1.4"/><rect x="544.5" y="71.5" width="13" height="12" fill="#fff" stroke="#666"/><rect x="545" y="72" width="5" height="3" fill="#e8412f"/><rect x="545" y="75.5" width="6" height="2.5" fill="#1e78c8"/><rect x="545" y="79" width="4" height="4" fill="#e8412f"/><path d="M550.5,72 V83.5 M545,75.5 H557.5" stroke="#888" stroke-width="0.8"/><rect x="550.5" y="78.5" width="9" height="9" fill="#fff" stroke="#555"/><path d="M552.5,82 H557.5 M552.5,84.5 H557.5 M556.5,80.5 L553.5,86" stroke="#444" stroke-width="0.9"/><rect x="544.5" y="94.5" width="15" height="13" fill="#fff" stroke="#666"/><path d="M544.5,98 H559.5 M549.5,94.5 V107.5 M554.5,94.5 V107.5 M544.5,102 H559.5" stroke="#999" stroke-width="0.8"/><rect x="548" y="98.5" width="7" height="7" fill="#bcdcf0"/><path d="M561.5,95.5 L555.5,102.5" stroke="#f3f3f3" stroke-width="4.5"/><path d="M561.5,95.5 L555.5,102.5" stroke="#777" stroke-width="2.6"/><path d="M548,109.5 C548.5,106 551,103 554.5,102.5 L557.5,105.5 C557,108.5 552,110.5 548,109.5 Z" fill="#1e78c8" stroke="#f3f3f3" stroke-width="0.6"/><rect x="544.5" y="117.5" width="15" height="13" fill="#fff" stroke="#666"/><path d="M544.5,121 H559.5 M549.5,117.5 V130.5 M554.5,117.5 V130.5 M544.5,125 H559.5" stroke="#999" stroke-width="0.8"/><rect x="548" y="121.5" width="7" height="7" fill="#bcdcf0"/><path d="M561.5,118.5 L555.5,125.5" stroke="#f3f3f3" stroke-width="4.5"/><path d="M561.5,118.5 L555.5,125.5" stroke="#777" stroke-width="2.6"/><path d="M548,132.5 C548.5,129 551,126 554.5,125.5 L557.5,128.5 C557,131.5 552,133.5 548,132.5 Z" fill="#1e78c8" stroke="#f3f3f3" stroke-width="0.6"/><path d="M717,78.5 H722 L719.5,81 Z M721.5,101.5 H726.5 L724,104 Z M633.5,124.5 H638.5 L636,127 Z" fill="#666"/><g fill="none" stroke="#666" stroke-width="1"><rect x="753.5" y="71.5" width="7" height="4"/><rect x="753.5" y="80.5" width="7" height="6"/><path d="M753.5,83.5 H760.5 M757,80.5 V86.5"/></g><rect x="761.5" y="75.5" width="7.5" height="4.5" fill="#bcdcf0" stroke="#666"/><path d="M765,75.5 V80" stroke="#666"/><path d="M761,78 H754.5 M757.5,75 L754.5,78 L757.5,81" fill="none" stroke="#1e78c8" stroke-width="1.6"/><g fill="none" stroke="#666" stroke-width="1"><rect x="753.5" y="94.5" width="7" height="4"/><rect x="753.5" y="103.5" width="7" height="6"/><path d="M753.5,106.5 H760.5 M757,103.5 V109.5"/></g><rect x="756.5" y="98.5" width="5" height="4.5" fill="#bcdcf0" stroke="#666"/><path d="M762,98 L768,105 M768,98 L762,105" stroke="#e8412f" stroke-width="1.3"/><path d="M753.5,117 V120 M767.5,117 V120 M754,118.5 H767 M756,117 L754,118.5 L756,120 M765,117 L767,118.5 L765,120" fill="none" stroke="#1e78c8" stroke-width="1"/><g fill="none" stroke="#666" stroke-width="1"><rect x="753.5" y="121.5" width="14" height="10"/><path d="M753.5,124.5 H767.5 M753.5,128 H767.5 M757,121.5 V131.5 M760.5,121.5 V131.5 M764,121.5 V131.5"/></g><rect x="757" y="124.5" width="3.5" height="3.5" fill="#1e78c8"/><path d="M830,78 H835 L832.5,81 Z M826.5,101 H831.5 L829,104 Z M818,124 H823 L820.5,127 Z" fill="#666"/><path d="M875,72.5 H861.5 L868.5,78.3 L861.5,84.5 H875" fill="none" stroke="#3c3c3c" stroke-width="2"/><path d="M882,78 H887 L884.5,81 Z M915,78 H920 L917.5,81 Z M880,101 H885 L882.5,104 Z M915,101 H920 L917.5,104 Z M880,125 H885 L882.5,128 Z" fill="#555"/><path d="M896.5,78.5 L899,71.5 L901.5,78.5 M897.4,76.2 H900.6" fill="none" stroke="#1e78c8" stroke-width="1.5"/><path d="M901.5,80.5 H898.5 A1.6,1.6 0 0 0 898.5,83.7 H901.5 M901.5,80.5 V87 M899.5,83.7 L897,87" fill="none" stroke="#9c46a8" stroke-width="1.4"/><path d="M904,76 H911.5 L908.8,80 V83 H906.7 V80 Z" fill="#555"/><rect x="861.5" y="94.5" width="13.5" height="15" fill="#fff" stroke="#666"/><rect x="861.5" y="94.5" width="13.5" height="2.5" fill="#777"/><path d="M868.25,98.5 V107 M864.5,103.5 L868.25,107 L872,103.5" fill="none" stroke="#1e78c8" stroke-width="2"/><circle cx="904" cy="101" r="4.3" fill="none" stroke="#1e78c8" stroke-width="1.8"/><path d="M900.8,104.3 L897,108" stroke="#1e78c8" stroke-width="2.4"/><path d="M869,118.5 L874,123.5 L866,131.5 L861,126.5 Z" fill="#f47f8a"/><path d="M863.3,124.2 L868.3,129.2" stroke="#f3f3f3" stroke-width="1"/><path d="M935,149 L942,153" stroke="none"/><path d="M943.5,154 L948.5,149 L953.5,154" fill="none" stroke="#555" stroke-width="1.1"/><path d="M93.5,152 V145.5 H100" fill="none" stroke="#555" stroke-width="1"/><path d="M96,148 L100,152 M100.5,148.5 V152.5 H97" fill="none" stroke="#555" stroke-width="1"/><path d="M307.5,152 V145.5 H314" fill="none" stroke="#555" stroke-width="1"/><path d="M310,148 L314,152 M314.5,148.5 V152.5 H311" fill="none" stroke="#555" stroke-width="1"/><path d="M427.5,152 V145.5 H434" fill="none" stroke="#555" stroke-width="1"/><path d="M430,148 L434,152 M434.5,148.5 V152.5 H431" fill="none" stroke="#555" stroke-width="1"/><path d="M521.5,152 V145.5 H528" fill="none" stroke="#555" stroke-width="1"/><path d="M524,148 L528,152 M528.5,148.5 V152.5 H525" fill="none" stroke="#555" stroke-width="1"/><path d="M148,177.5 H155 L151.5,181.5 Z" fill="#555"/><g fill="#9a9a9a"><rect x="176" y="175" width="2" height="2"/><rect x="176" y="180" width="2" height="2"/><rect x="176" y="185" width="2" height="2"/></g><path d="M206,176.5 L216,186 M216,176.5 L206,186" stroke="#bdbdbd" stroke-width="1.4"/><path d="M241.5,181 L245.5,185.5 L254,176.5" fill="none" stroke="#c6c6c6" stroke-width="1.8"/><path d="M945.5,178 L948.75,181.5 L952,178" fill="none" stroke="#666" stroke-width="1.8"/><path d="M11,220 H23 V208 Z" fill="#b4b4b4"/><path d="M947.5,216 H955.5 L951.5,212 Z M947.5,648 H955.5 L951.5,652 Z" fill="#777"/><path d="M604,669 V676 L600,672.5 Z M932,669 V676 L936,672.5 Z" fill="#555"/><path d="M32,668 V676 L28,672 Z M57,668 V676 L61,672 Z" fill="#c0c0c0"/><circle cx="249" cy="672" r="7.3" fill="none" stroke="#777" stroke-width="1.2"/><path d="M249,667.5 V676.5 M244.5,672 H253.5" stroke="#6a6a6a" stroke-width="2"/><g fill="#a0a0a0"><rect x="577" y="667" width="2" height="2"/><rect x="577" y="671" width="2" height="2"/><rect x="577" y="675" width="2" height="2"/></g><circle cx="70" cy="692.5" r="2.8" fill="#555"/><g fill="none" stroke="#555" stroke-width="1"><path d="M72.5,690.5 H79.5 V702.5 H68.5 V695.5"/><path d="M70,697.5 H79 M70,700 H79 M72,695.5 V702 M74.5,695.5 V702 M77,695.5 V702" stroke-dasharray="1,1"/></g><rect x="73" y="690" width="7" height="3" fill="#555"/><g fill="none" stroke="#666" stroke-width="1"><rect x="674.5" y="690.5" width="12" height="12"/><path d="M674.5,694.5 H686.5 M674.5,698.5 H686.5 M678.5,690.5 V702.5 M682.5,690.5 V702.5"/></g><g fill="none" stroke="#666" stroke-width="1"><rect x="712.5" y="690.5" width="13" height="12"/><rect x="715.5" y="692.5" width="7" height="8"/><path d="M717,694.5 H721 M717,696.5 H721 M717,698.5 H721"/></g><g fill="none" stroke="#666" stroke-width="1"><rect x="750.5" y="690.5" width="13" height="12"/><path d="M750.5,698.5 H758.5 V690.5 M754.5,690.5 V698.5"/></g><path d="M781,696.5 H787" stroke="#555" stroke-width="1.6"/><path d="M791,696.5 H891" stroke="#a6a6a6" stroke-width="1"/><rect x="839" y="691" width="5" height="11" fill="#6a6a6a"/><path d="M895,696.5 H902 M898.5,693 V700" stroke="#555" stroke-width="1.6"/></svg>
<div class="t" style="left:12px;top:108px;font-size:12px;color:#a6a6a6;letter-spacing:-0.4px">Вставить</div>
<div class="t" style="left:116px;top:82px;font-size:12px;color:#262626;">Calibri</div>
<div class="t" style="left:220px;top:82px;font-size:12px;color:#262626;">12</div>
<div class="t" style="left:117px;top:112px;font-size:13px;color:#444;font-weight:bold;transform:scaleX(1.08);transform-origin:0 0">Ж</div>
<div class="t" style="left:141px;top:112px;font-size:12.5px;color:#444;font-weight:bold;font-style:italic">К</div>
<div class="t" style="left:163px;top:112px;font-size:12.5px;color:#444;font-weight:bold">Ч</div>
<div class="t" style="left:450px;top:74px;font-size:12px;color:#262626;">Текстовы</div>
<div class="t" style="left:486px;top:95px;font-size:15px;color:#444;">%</div>
<div class="t" style="left:507px;top:98px;font-size:9px;color:#444;font-weight:bold;letter-spacing:0px">000</div>
<div class="t" style="left:400px;top:70px;font-size:12.5px;color:#444;letter-spacing:-0.4px">ab</div>
<div class="t" style="left:401px;top:76px;font-size:12.5px;color:#444;">c</div>
<svg class="a" style="left:0;top:0" width="963" height="709"><path d="M412.5,79.5 V83 H408.5 M410.3,81.3 L408.5,83 L410.3,84.7" fill="none" stroke="#1e78c8" stroke-width="1.2"/></svg>
<div class="t" style="left:457px;top:117px;font-size:9px;color:#444;">0</div>
<div class="t" style="left:450px;top:124px;font-size:9px;color:#444;">,00</div>
<div class="t" style="left:474px;top:117px;font-size:9px;color:#444;">,00</div>
<div class="t" style="left:479px;top:124px;font-size:9px;color:#444;">,0</div>
<div class="t" style="left:382px;top:118px;font-size:12.5px;color:#444;letter-spacing:-0.3px;transform:rotate(-48deg);transform-origin:50% 50%">ab</div>
<div class="t" style="left:563px;top:74px;font-size:12px;color:#262626;">Условное форматирование</div>
<div class="t" style="left:563px;top:98px;font-size:12px;color:#262626;">Форматировать как таблицу</div>
<div class="t" style="left:563px;top:121px;font-size:12px;color:#262626;">Стили ячеек</div>
<div class="t" style="left:772px;top:74px;font-size:12px;color:#262626;">Вставить</div>
<div class="t" style="left:772px;top:98px;font-size:12px;color:#262626;">Удалить</div>
<div class="t" style="left:772px;top:121px;font-size:12px;color:#262626;">Формат</div>
<div class="a" style="left:0px;top:0px;width:1px;height:709px;background:#027441;"></div>
<div class="a" style="left:962px;top:0px;width:1px;height:709px;background:#027441;"></div>
<div class="a" style="left:0px;top:707px;width:963px;height:2px;background:#027441;"></div>
</body></html>
